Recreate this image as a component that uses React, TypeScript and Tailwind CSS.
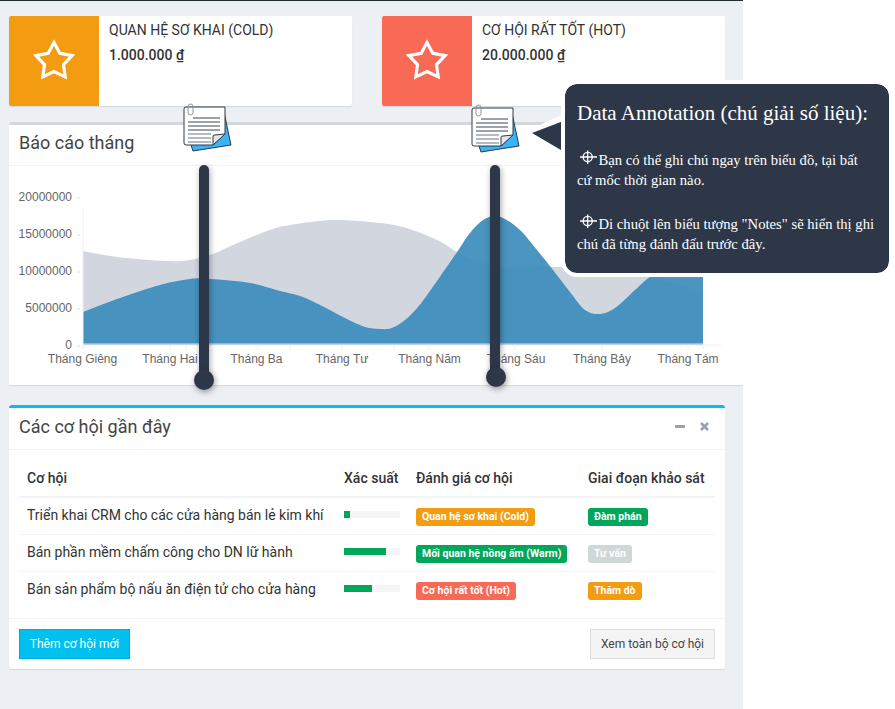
import React from "react";

type Pt = [number, number];

const grayPts: Pt[] = [[83, 251], [117, 257], [167, 261], [190, 260], [213, 254], [233, 245], [267, 231], [290, 225], [333, 220], [370, 222], [403, 227], [437, 240], [457, 252], [470, 258], [503, 267], [553, 267], [600, 269], [650, 277], [703, 292]];
const bluePts: Pt[] = [[83, 312], [120, 298], [160, 285], [190, 279], [210, 279], [250, 283], [280, 291], [300, 296], [320, 305], [345, 318], [365, 327], [380, 329], [392, 328], [405, 320], [418, 307], [430, 291], [457, 252], [470, 233], [483, 220], [495, 216], [505, 219], [520, 230], [537, 250], [553, 270], [570, 292], [585, 310], [600, 314], [615, 308], [635, 290], [650, 277], [680, 260], [703, 256]];

// catmull-rom to bezier, closed down to the axis
function areaPath(pts: Pt[], base: number) {
  let d = `M${pts[0][0]} ${base} L${pts[0][0]} ${pts[0][1]}`;
  for (let i = 0; i < pts.length - 1; i++) {
    const p0 = pts[Math.max(i - 1, 0)];
    const p1 = pts[i];
    const p2 = pts[i + 1];
    const p3 = pts[Math.min(i + 2, pts.length - 1)];
    const c1x = p1[0] + (p2[0] - p0[0]) / 6;
    const c1y = p1[1] + (p2[1] - p0[1]) / 6;
    const c2x = p2[0] - (p3[0] - p1[0]) / 6;
    const c2y = p2[1] - (p3[1] - p1[1]) / 6;
    d += ` C${c1x} ${c1y} ${c2x} ${c2y} ${p2[0]} ${p2[1]}`;
  }
  return d + ` L${pts[pts.length - 1][0]} ${base} Z`;
}

const yLabels = [
  { t: "20000000", y: 196 },
  { t: "15000000", y: 233 },
  { t: "10000000", y: 270 },
  { t: "5000000", y: 307 },
  { t: "0", y: 344 },
];
const xLabels = [
  { t: "Tháng Giêng", x: 82.5 },
  { t: "Tháng Hai", x: 170 },
  { t: "Tháng Ba", x: 256.5 },
  { t: "Tháng Tư", x: 342 },
  { t: "Tháng Năm", x: 429.5 },
  { t: "Tháng Sáu", x: 516 },
  { t: "Tháng Bảy", x: 602 },
  { t: "Tháng Tám", x: 688 },
];
const xTicks = [83, 170, 186, 256, 290, 342, 394, 429, 515, 602, 688, 703];

const rows = [
  { name: "Triển khai CRM cho các cửa hàng bán lẻ kim khí", pct: 10, rate: "Quan hệ sơ khai (Cold)", rateCls: "bg-[#f39c12]", stage: "Đàm phán", stageCls: "bg-[#00a65a]" },
  { name: "Bán phần mềm chấm công cho DN lữ hành", pct: 75, rate: "Mối quan hệ nồng ấm (Warm)", rateCls: "bg-[#00a65a]", stage: "Tư vấn", stageCls: "bg-[#cfd8d6]" },
  { name: "Bán sản phẩm bộ nấu ăn điện tử cho cửa hàng", pct: 50, rate: "Cơ hội rất tốt (Hot)", rateCls: "bg-[#f86a56]", stage: "Thăm dò", stageCls: "bg-[#f39c12]" },
];

function StarIcon() {
  return (
    <svg width="50" height="50" viewBox="0 0 50 50" fill="none" stroke="#fff" strokeWidth="3.2" strokeMiterlimit="10">
      <polygon points="25,6.5 30.88,17.41 43.07,19.63 34.51,28.59 36.17,40.87 25,35.5 13.83,40.87 15.49,28.59 6.93,19.63 19.12,17.41" />
    </svg>
  );
}

function InfoBox({ title, value, color }: { title: string; value: string; color: string }) {
  return (
    <div className="flex w-[343px] h-[90px] bg-white rounded-[2px] shadow-[0_1px_1px_rgba(0,0,0,0.1)] overflow-hidden">
      <div className={`w-[90px] h-[90px] flex items-center justify-center ${color}`}>
        <StarIcon />
      </div>
      <div className="pl-[10px] pt-[4px] text-[14px] leading-[20px] text-[#333]">
        <div>{title}</div>
        <div className="mt-[5px] font-medium">{value}</div>
      </div>
    </div>
  );
}

function NoteIcon({ className }: { className: string }) {
  return (
    <svg className={className} width="56" height="56" viewBox="0 0 56 56" fill="none">
      <path d="M44 12 L51 45 L13 51 L11 45 Z" fill="#3ab4f8" stroke="#2f3a44" strokeWidth="1" />
      <path d="M4 9 Q4 7 6 7 L45 7 L45 34 L33 45 L6 45 Q4 45 4 43 Z" fill="#fff" stroke="#2f3a44" strokeWidth="1" />
      <path d="M33 45 L33 36 Q33 35 35 35 L45 34 Z" fill="#e4e7ea" stroke="#2f3a44" strokeWidth="1" />
      <path d="M13 18 H40 M8 22 H40 M8 26 H40 M8 30 H40" stroke="#3a4650" strokeWidth="1" />
      <path d="M8 34 H31 M8 38 H31 M8 42 H31" stroke="#6b7680" strokeWidth="1.2" />
      <rect x="8" y="4" width="5" height="11" rx="2.5" stroke="#8a939a" strokeWidth="1" fill="none" />
    </svg>
  );
}

function Crosshair() {
  return (
    <svg className="inline-block align-[4px] -my-[4px]" width="21.5" height="16" viewBox="0 0 21.5 16" fill="none" stroke="#fff" strokeWidth="1.3">
      <circle cx="10.7" cy="8" r="4.6" />
      <path d="M3 8 H20 M10.7 1.5 V15" />
    </svg>
  );
}

function Marker({ barLeft, barTop, barHeight, dotLeft, dotTop }: { barLeft: string; barTop: string; barHeight: string; dotLeft: string; dotTop: string }) {
  return (
    <>
      <div className={`absolute w-[10px] rounded-[5px] bg-[#2d3748] shadow-[1px_2px_6px_rgba(0,0,0,0.35)] ${barLeft} ${barTop} ${barHeight}`} />
      <div className={`absolute w-[20px] h-[20px] rounded-full bg-[#2d3748] shadow-[1px_2px_6px_rgba(0,0,0,0.4)] ${dotLeft} ${dotTop}`} />
    </>
  );
}

export default function App() {
  return (
    <div className="relative w-[895px] h-[709px] bg-white overflow-hidden [font-family:Roboto,sans-serif]">
      <div className="w-[743px] h-[709px] bg-[#ecf0f5] border-t border-[#222d32] overflow-hidden">
        <div className="flex gap-[30px] pl-[9px] pt-[15px]">
          <InfoBox title="QUAN HỆ SƠ KHAI (COLD)" value="1.000.000 ₫" color="bg-[#f39c12]" />
          <InfoBox title="CƠ HỘI RẤT TỐT (HOT)" value="20.000.000 ₫" color="bg-[#f86a56]" />
        </div>

        <div className="ml-[9px] mt-[16px] h-[263px] bg-white border-t-[3px] border-[#d2d6de] rounded-t-[3px] shadow-[0_1px_1px_rgba(0,0,0,0.1)]">
          <div className="h-[41px] pl-[10px] pb-[5px] flex items-center border-b border-[#f4f4f4] text-[18px] text-[#444]">Báo cáo tháng</div>
          <svg className="block" width="734" height="219" viewBox="9 166 734 219">
            <path d={areaPath(grayPts, 344)} fill="#d2d6de" />
            <path d={areaPath(bluePts, 344)} fill="rgba(60,141,188,0.93)" />
            <rect x="83" y="343" width="620" height="2" fill="#8dbcd8" />
            <path d="M83 207 V345 H721" stroke="#eeeeee" fill="none" />
            {yLabels.map((l) => (
              <g key={l.t}>
                <line x1="77" x2="80" y1={l.y + 2} y2={l.y + 2} stroke="#dddddd" />
                <text x="72" y={l.y + 5} textAnchor="end" fontSize="12" fill="#666" fontFamily="'Liberation Sans', sans-serif">{l.t}</text>
              </g>
            ))}
            {xTicks.map((x) => (
              <line key={x} x1={x} x2={x} y1="345" y2="349" stroke="#eeeeee" />
            ))}
            {xLabels.map((l) => (
              <text key={l.t} x={l.x} y="363" textAnchor="middle" fontSize="12" fill="#666" fontFamily="'Liberation Sans', sans-serif">{l.t}</text>
            ))}
          </svg>
        </div>

        <div className="ml-[9px] mt-[20px] w-[716px] h-[264px] bg-white border-t-[3px] border-[#00c0ef] rounded-t-[3px] rounded-b-[3px] shadow-[0_1px_1px_rgba(0,0,0,0.1)]">
          <div className="h-[42px] pl-[10px] pr-[16px] pb-[4px] flex items-center justify-between border-b border-[#f4f4f4] text-[18px] text-[#444]">
            <span>Các cơ hội gần đây</span>
            <span className="flex items-center gap-[15px]">
              <span className="w-[10px] h-[3px] bg-[#97a0b3]" />
              <svg width="9" height="9" viewBox="0 0 9 9" stroke="#97a0b3" strokeWidth="2.6"><path d="M1 1 L8 8 M8 1 L1 8" /></svg>
            </span>
          </div>
          <div className="px-[10px] pt-[10px] h-[169px] border-b border-[#f4f4f4]">
            <table className="table-fixed w-[696px] border-collapse text-[14px] text-[#333]">
              <thead>
                <tr className="h-[37px] border-b-2 border-[#f4f4f4] font-medium text-left">
                  <th className="w-[317px] pl-[8px] font-medium">Cơ hội</th>
                  <th className="w-[72px] pl-[8px] font-medium">Xác suất</th>
                  <th className="w-[172px] pl-[8px] font-medium">Đánh giá cơ hội</th>
                  <th className="w-[135px] pl-[8px] font-medium">Giai đoạn khảo sát</th>
                </tr>
              </thead>
              <tbody>
                {rows.map((r, i) => (
                  <tr key={r.name} className={`h-[37px] ${i < rows.length - 1 ? "border-b border-[#f4f4f4]" : ""}`}>
                    <td className="pl-[8px]">{r.name}</td>
                    <td className="pl-[8px]">
                      <div className="w-[56px] h-[7px] bg-[#f5f5f5] mb-[2px]">
                        <div className="h-full bg-[#00a65a]" style={{ width: `${r.pct}%` }} />
                      </div>
                    </td>
                    <td className="pl-[8px]">
                      <span className={`inline-block h-[18px] px-[6px] rounded-[3px] text-[10.5px] leading-[17px] font-bold text-white ${r.rateCls}`}>{r.rate}</span>
                    </td>
                    <td className="pl-[8px]">
                      <span className={`inline-block h-[18px] px-[6px] rounded-[3px] text-[10.5px] leading-[17px] font-bold text-white ${r.stageCls}`}>{r.stage}</span>
                    </td>
                  </tr>
                ))}
              </tbody>
            </table>
          </div>
          <div className="flex justify-between px-[10px] pt-[10px]">
            <button className="w-[111px] h-[30px] bg-[#00c0ef] border border-[#00acd6] text-white text-[12px]">Thêm cơ hội mới</button>
            <button className="w-[125px] h-[30px] bg-[#f4f4f4] border border-[#dddddd] text-[#444] text-[12px]">Xem toàn bộ cơ hội</button>
          </div>
        </div>
      </div>

      <Marker barLeft="left-[199px]" barTop="top-[165px]" barHeight="h-[215px]" dotLeft="left-[194px]" dotTop="top-[370px]" />
      <Marker barLeft="left-[490px]" barTop="top-[165px]" barHeight="h-[212px]" dotLeft="left-[486px]" dotTop="top-[367px]" />
      <NoteIcon className="absolute left-[180px] top-[100px]" />
      <NoteIcon className="absolute left-[468px] top-[101px]" />

      <svg className="absolute left-[522px] top-[112px]" width="48" height="50" viewBox="522 112 48 50">
        <polygon points="522,133 566,113 566,161" fill="#ffffff" />
        <polygon points="532,133 566,120 566,153" fill="#2d3748" />
      </svg>
      <div className="absolute left-[561px] top-[80px] w-[332px] h-[197px] border-4 border-white rounded-[16px] bg-[#2d3748] text-white pl-[12px] pr-[14px] [font-family:'Liberation_Serif',serif] bg-clip-padding">
        <div className="mt-[16px] text-[21px] leading-[26px]">Data Annotation (chú giải số liệu):</div>
        <div className="mt-[24px] text-[14.67px] leading-[20px]"><Crosshair />Bạn có thể ghi chú ngay trên biểu đồ, tại bất cứ mốc thời gian nào.</div>
        <div className="mt-[24px] text-[14.67px] leading-[20px]"><Crosshair />Di chuột lên biểu tượng "Notes" sẽ hiển thị ghi chú đã từng đánh đấu trước đây.</div>
      </div>
    </div>
  );
}
